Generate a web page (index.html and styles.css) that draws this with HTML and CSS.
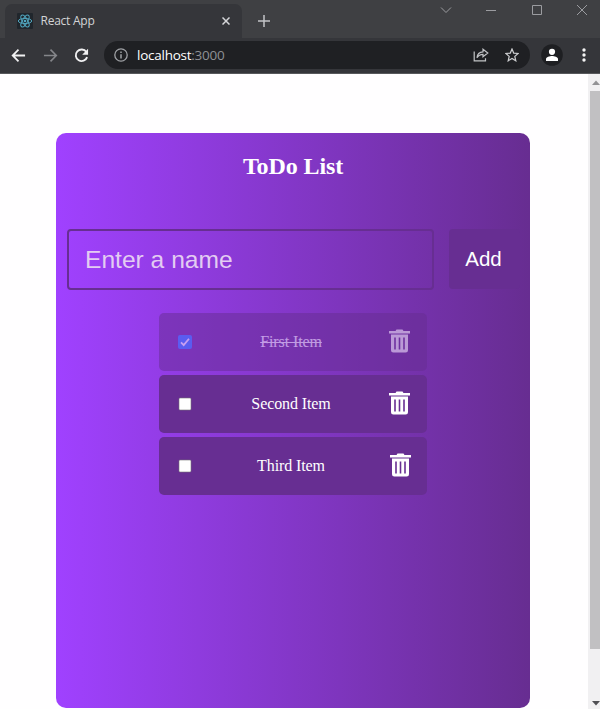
FILE: index.html
```html
<!DOCTYPE html>
<html lang="en">
<head>
<meta charset="utf-8">
<title>React App</title>
<link rel="stylesheet" href="styles.css">
</head>
<body>
<header class="tabs">
  <div class="tab">
    <svg class="favicon" viewBox="0 0 16 16"><rect width="16" height="16" rx="1" fill="#20262c"/><g fill="none" stroke="#51a6bf" stroke-width="1"><ellipse cx="8" cy="8" rx="6.7" ry="2.6"/><ellipse cx="8" cy="8" rx="6.7" ry="2.6" transform="rotate(60 8 8)"/><ellipse cx="8" cy="8" rx="6.7" ry="2.6" transform="rotate(120 8 8)"/></g><circle cx="8" cy="8" r="1.3" fill="#51a6bf"/></svg>
    <span class="tab-title">React App</span>
    <svg class="tab-close" viewBox="0 0 8 8"><path d="M.5.5l7 7M7.5.5l-7 7" fill="none" stroke="#d5d6d9" stroke-width="1.5"/></svg>
  </div>
  <svg class="new-tab" viewBox="0 0 12 12"><path d="M6 0v12M0 6h12" fill="none" stroke="#c3c4c7" stroke-width="1.5"/></svg>
  <div class="window-controls">
    <svg viewBox="0 0 12 12"><path d="M1 3.5l5 5 5-5"/></svg>
    <svg viewBox="0 0 12 12"><path d="M1 6.5h10"/></svg>
    <svg viewBox="0 0 12 12"><path d="M1.5 1.5h9v9h-9z"/></svg>
    <svg viewBox="0 0 12 12"><path d="M1 1l10 10M11 1L1 11"/></svg>
  </div>
</header>
<nav class="toolbar">
  <svg class="nav-icon" viewBox="0 0 16 16"><path d="M15 8H2M8 1.8L1.8 8 8 14.2" fill="none" stroke="#f1f1f2" stroke-width="1.9"/></svg>
  <svg class="nav-icon" viewBox="0 0 16 16"><path d="M1 8h13M8 1.8L14.2 8 8 14.2" fill="none" stroke="#85868a" stroke-width="1.7"/></svg>
  <svg class="nav-icon" viewBox="0 0 16 16"><path d="M13.2 4.2A6.2 6.2 0 1 0 14 9.7" fill="none" stroke="#f1f1f2" stroke-width="2"/><path d="M15 .8v6.4H8.7z" fill="#f1f1f2"/></svg>
  <div class="address">
    <svg class="info" viewBox="0 0 14 14"><circle cx="7" cy="7" r="6.2" fill="none" stroke="#a0a2a6" stroke-width="1.3"/><path d="M7 6.2v4.2M7 3.6v1.5" stroke="#a0a2a6" stroke-width="1.5"/></svg>
    <span class="url"><b>localhost</b>:3000</span>
    <svg class="share" viewBox="0 0 16 14"><g fill="none" stroke="#c2c3c6" stroke-width="1.2"><path d="M1.2 3.5v9.4h11.3v-2.7"/><path d="M4 9.7C4.3 6 6.5 4 10 3.8V1.2L14.8 5 10 8.8V6.4C7.5 6.4 5.6 7.2 4 9.7z"/></g></svg>
    <svg class="star" viewBox="0 0 14 14"><path d="M7 1l1.7 4.1 4.5.4-3.4 2.9 1 4.4L7 10.5l-3.8 2.3 1-4.4L.8 5.5l4.5-.4z" fill="none" stroke="#cecfd1" stroke-width="1.2"/></svg>
  </div>
  <svg class="profile" viewBox="0 0 22 22"><circle cx="11" cy="11" r="10.8" fill="#1e1f22"/><circle cx="11" cy="7.8" r="3.1" fill="#fff"/><path d="M5 17v-2c0-2 3.6-3 6-3s6 1 6 3v2z" fill="#fff"/></svg>
  <svg class="more" viewBox="0 0 4 14"><g fill="#f4f4f4"><circle cx="2" cy="2" r="1.7"/><circle cx="2" cy="7" r="1.7"/><circle cx="2" cy="12" r="1.7"/></g></svg>
</nav>
<div class="viewport">
  <main class="page">
    <section class="card">
      <h1>ToDo List</h1>
      <form class="entry">
        <input class="name" type="text" placeholder="Enter a name">
        <button class="add" type="button">Add</button>
      </form>
      <ul class="items">
        <li class="item done">
          <svg class="box" viewBox="0 0 14 14"><rect width="14" height="14" rx="2" fill="#267dff"/><path d="M3 7.3l2.7 2.8L11 3.7" fill="none" stroke="#fff" stroke-width="1.8"/></svg>
          <span class="label">First Item</span>
          <svg class="trash" viewBox="0 0 21 24"><use href="#bin"/></svg>
        </li>
        <li class="item">
          <svg class="box" viewBox="0 0 14 14"><rect x="1" y="1" width="12" height="12" rx="1" fill="#fff" stroke="#777" stroke-width=".6"/></svg>
          <span class="label">Second Item</span>
          <svg class="trash" viewBox="0 0 21 24"><path id="bin" fill="#fff" fill-rule="evenodd" d="M0 2h6.5L7.5.5h6l1 1.5H21v2.4H0zM2 5.500h17v15.700q0 2.300-2.300 2.300H4.300q-2.300 0-2.300-2.300zM5.200 8.500v12h1.600v-12zM9.700 8.500v12h1.600v-12zM14.200 8.500v12h1.600v-12z"/></svg>
        </li>
        <li class="item">
          <svg class="box" viewBox="0 0 14 14"><rect x="1" y="1" width="12" height="12" rx="1" fill="#fff" stroke="#777" stroke-width=".6"/></svg>
          <span class="label">Third Item</span>
          <svg class="trash last" viewBox="0 0 21 24"><use href="#bin"/></svg>
        </li>
      </ul>
    </section>
  </main>
  <aside class="scrollbar">
    <svg class="arrow" viewBox="0 0 8 5"><path d="M0 5l4-4.500L8 5z" fill="#929295"/></svg>
    <div class="thumb"></div>
    <svg class="arrow down" viewBox="0 0 8 5"><path d="M0 0l4 4.500L8 0z" fill="#505054"/></svg>
  </aside>
</div>
</body>
</html>
```
FILE: styles.css
```css
* { box-sizing: border-box; }
body {
  margin: 0;
  height: 709px;
  overflow: hidden;
  display: flex;
  flex-direction: column;
  background: #fffeff;
  font-family: "Liberation Serif", "Times New Roman", serif;
}
svg { display: block; flex: none; }
.tabs {
  height: 38px;
  flex: none;
  display: flex;
  align-items: flex-start;
  padding: 4px 12px 0 5px;
  background: #3f4043;
}
.tab {
  width: 237px;
  height: 34px;
  display: flex;
  align-items: center;
  padding: 0 12px 1px 12px;
  border-radius: 7px 7px 0 0;
  background: #35363a;
}
.favicon { width: 16px; height: 16px; }
.tab-title {
  flex: 1;
  margin-left: 7.500px;
  font: 12px "Open Sans", "Noto Sans", sans-serif;
  letter-spacing: -.25px;
  color: #d3d4d6;
}
.tab-close { width: 8px; height: 8px; }
.new-tab { width: 12px; height: 12px; margin: 11px 0 0 15.500px; }
.window-controls {
  display: flex;
  gap: 33.300px;
  margin-left: auto;
}
.window-controls svg {
  width: 12px;
  height: 12px;
  fill: none;
  stroke: #9b9ca0;
  stroke-width: 1;
}
.toolbar {
  height: 36px;
  flex: none;
  display: flex;
  align-items: center;
  padding: 0 14px 1px 11px;
  background: #35363a;
  border-bottom: 1px solid #57585b;
}
.nav-icon { width: 15px; height: 15px; margin-right: 16.500px; }
.address {
  width: 426px;
  height: 28px;
  margin-left: -1.500px;
  display: flex;
  align-items: center;
  padding: 0 11px 0 10px;
  border-radius: 14px;
  background: #1f2023;
}
.info { width: 14px; height: 14px; }
.url {
  flex: 1;
  margin-left: 9px;
  font: 13.500px "Open Sans", "Noto Sans", sans-serif;
  letter-spacing: -.25px;
  color: #8e9094;
}
.url b { font-weight: 400; color: #fff; }
.share { width: 16px; height: 14px; margin-right: 16px; }
.star { width: 14px; height: 14px; }
.profile { width: 22px; height: 22px; margin-left: 11px; }
.more { width: 4px; height: 14px; margin-left: auto; }
.viewport { flex: 1; display: flex; min-height: 0; }
.page { flex: 1; padding: 59px 58px 1px 56px; }
.card {
  height: 575px;
  padding: 19px 8px 0 11px;
  border-radius: 10px;
  background: linear-gradient(90deg, #a041ff, #672d91);
}
h1 {
  margin: 0 3px 0 0;
  font-size: 24px;
  letter-spacing: -.1px;
  line-height: 28px;
  text-align: center;
  color: #fff;
}
.entry { display: flex; gap: 15px; margin-top: 49px; }
.name {
  width: 367px;
  height: 61px;
  padding: 0 16px;
  border: 2px solid #672e92;
  border-radius: 4px;
  background: transparent;
  font: 24.600px "Liberation Sans", Arial, sans-serif;
  color: #fff;
}
.name::placeholder { color: #e3ccf2; opacity: 1; }
.add {
  width: 71px;
  height: 60px;
  padding: 0 2px 0 0;
  border: 0;
  border-radius: 4px;
  background: #672e92;
  font: 20.500px "Liberation Sans", Arial, sans-serif;
  color: #fff;
}
.items {
  width: 268px;
  margin: 23px 0 0 92px;
  padding: 0;
  list-style: none;
  display: grid;
  gap: 4px;
}
.item {
  height: 58px;
  display: flex;
  align-items: center;
  padding: 0 17px 0 19px;
  border-radius: 5px;
  background: #672e92;
  color: #fff;
}
.done { opacity: .5; }
.done .label { text-decoration: line-through; }
.box { width: 14px; height: 14px; }
.label {
  flex: 1;
  padding: 0 1px 0 2px;
  font-size: 16px;
  letter-spacing: -.1px;
  text-align: center;
}
.trash { width: 21px; height: 24px; margin-bottom: 3px; }
.last { margin-right: -1px; margin-left: 1px; }
.scrollbar {
  width: 12px;
  display: flex;
  flex-direction: column;
  padding: 6px 0 3px 2px;
  background: #f1f0f2;
}
.arrow { width: 8px; height: 5px; margin-left: 2px; }
.thumb { height: 558px; margin-top: 6px; background: #c1c0c2; }
.down { margin-top: auto; }
```
